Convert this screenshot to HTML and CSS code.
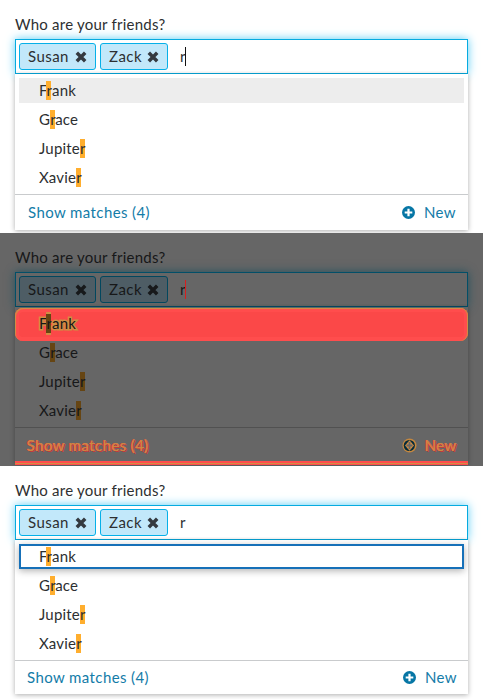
FILE: index.html
```html
<!DOCTYPE html>
<html lang="en"><head><meta charset="utf-8"><title>Friends</title><link rel="stylesheet" href="styles.css"></head>
<body>
<svg class="defs" width="0" height="0"><defs>
<symbol id="x" viewBox="0 0 12 12"><path d="M1.8 1.8 10.2 10.2M10.2 1.8 1.8 10.2" stroke="currentColor" stroke-width="3.5"/></symbol>
<symbol id="plus" viewBox="0 0 13 13"><circle cx="6.5" cy="6.5" r="6.5" fill="currentColor"/><path d="M6.5 2.7v7.6M2.7 6.5h7.6" stroke="#fff" stroke-width="2.2"/></symbol>
<symbol id="plus-diff" viewBox="0 0 15 15"><circle cx="7.5" cy="7.5" r="7" fill="#c4873f"/><circle cx="7.3" cy="7.5" r="5.6" fill="#042b3b"/><path d="M7.500 2.200 12 7.500 7.500 12.800 3 7.500z" fill="#d18d43"/><path d="M7.500 4v7M4.500 7.500h6" stroke="#666" stroke-width="1.800"/></symbol>
</defs></svg>
<section class="panel before">
<div class="label">Who are your friends?</div>
<div class="field"><span class="chip susan"><span>Susan</span><svg><use href="#x"/></svg></span><span class="chip zack"><span>Zack</span><svg><use href="#x"/></svg></span><span class="typed">r</span><i class="caret"></i></div>
<div class="menu"><div class="list"><div class="item active">F<mark>r</mark>ank</div><div class="item">G<mark>r</mark>ace</div><div class="item">Jupite<mark>r</mark></div><div class="item">Xavie<mark>r</mark></div></div>
<div class="footer"><span class="show">Show matches (4)</span><svg><use href="#plus"/></svg><span class="new">New</span></div></div>
</section>
<section class="panel diff">
<div class="label">Who are your friends?</div>
<div class="field"><span class="chip susan"><span>Susan</span><svg><use href="#x"/></svg></span><span class="chip zack"><span>Zack</span><svg><use href="#x"/></svg></span><span class="typed">r</span><i class="caret"></i></div>
<div class="menu"><div class="list"><div class="item active"><span class="halo">F<mark>r</mark>ank</span></div><div class="item">G<mark>r</mark>ace</div><div class="item">Jupite<mark>r</mark></div><div class="item">Xavie<mark>r</mark></div></div>
<div class="footer"><span class="show">Show matches (4)</span><svg><use href="#plus-diff"/></svg><span class="new">New</span></div></div>
</section>
<section class="panel after">
<div class="label">Who are your friends?</div>
<div class="field"><span class="chip susan"><span>Susan</span><svg><use href="#x"/></svg></span><span class="chip zack"><span>Zack</span><svg><use href="#x"/></svg></span><span class="typed">r</span></div>
<div class="menu"><div class="list"><div class="item active">F<mark>r</mark>ank</div><div class="item">G<mark>r</mark>ace</div><div class="item">Jupite<mark>r</mark></div><div class="item">Xavie<mark>r</mark></div></div>
<div class="footer"><span class="show">Show matches (4)</span><svg><use href="#plus"/></svg><span class="new">New</span></div></div>
</section>
</body></html>
```
FILE: styles.css
```css
*{box-sizing:border-box}
body{margin:0;background:#fff;font:15px/19px Lato,sans-serif;color:#2d2f31;letter-spacing:.3px;width:483px;height:699px;overflow:hidden}
.defs{display:block;height:0}
.panel{height:233px;padding:15px 15px 0;overflow:hidden;background:#fff}
.label{height:24px;line-height:19px;letter-spacing:.23px;white-space:nowrap}
.field{width:453px;height:35px;border:1px solid #06abe0;display:flex;padding:3px;box-shadow:0 0 9px #5bcdf5;background:#fff}
.chip{height:27px;border:1px solid #06b0e8;border-radius:3px;background:#c2e8fa;display:flex;align-items:center;justify-content:space-between;padding:0 8px;margin-right:4px;letter-spacing:.45px}
.chip svg{width:12px;height:12px;color:#343a40}
.susan{width:77px}
.zack{width:68px}
.typed{margin-left:8px;line-height:27px;width:5px}
.caret{width:1px;height:19px;background:#111;margin-top:4px}
.menu{width:453px;height:156px;background:#fff;box-shadow:0 1px 5px rgba(0,0,0,.32);clip-path:inset(-3px -10px -10px -10px)}
.list{height:121px;padding:4px;border-bottom:1px solid #c9cbcd}
.item{height:25px;margin-bottom:4px;padding:3px 20px;line-height:19px;letter-spacing:.2px}
.active{background:#ededed}
mark{background:#ffae2e;color:inherit;display:inline-block;width:5px;height:19px;letter-spacing:0}
.active mark{margin-left:-1.3px;margin-right:.7px}
.footer{height:35px;display:flex;align-items:center;padding:0 13px;color:#147ca8}
.show{flex:1;letter-spacing:.4px}
.footer svg{width:13px;height:13px;margin-right:9px;color:#0676a5}
.new{width:31px}
.after .menu{height:154px}
.after .footer{height:33px;padding:0 12px}
.after .active{background:#fff;border:2px solid #1670b8;padding:1px 18px;box-shadow:0 2px 7px rgba(0,0,0,.3)}
.diff{background:#666;color:#171819}
.diff .field{background:#666;border-color:#024f68;box-shadow:0 0 9px #24525f}
.diff .chip{background:#4e5d65;border-color:#02475e}
.diff .chip svg{color:#17191b}
.diff .caret{background:#d71f1f}
.diff .menu{background:#666}
.diff .list{border-color:#515151;padding-top:1px}
.diff .active{height:33px;margin:0 -4px -1px;padding:6px 24px;background:#fb4848;border-radius:8px;box-shadow:inset 1px 1px #d18d43,inset -1px 0 #d18d43,inset 0 0 0 4px #ff4d4d}
.diff mark{background:#664513}
.halo{display:inline-block;height:19px;-webkit-text-stroke:3px #d18d43;paint-order:stroke fill}
.halo mark{-webkit-text-stroke:0;box-shadow:0 -2px #d18d43,0 2px #d18d43}
.diff .footer{padding:2px 12px 4px;color:#c88b42;background:linear-gradient(#ff4d4d 0 2px,#d18d43 2px 3px,#ff4d4d 3px) 0 32px/100% 4px no-repeat;height:37px;background-position:0 33px}
.diff .show,.diff .new{text-shadow:-1px 0 #fb4848,1px 1px #c03c3c}
.diff .footer svg{width:15px;height:15px;margin-right:8px}
```
